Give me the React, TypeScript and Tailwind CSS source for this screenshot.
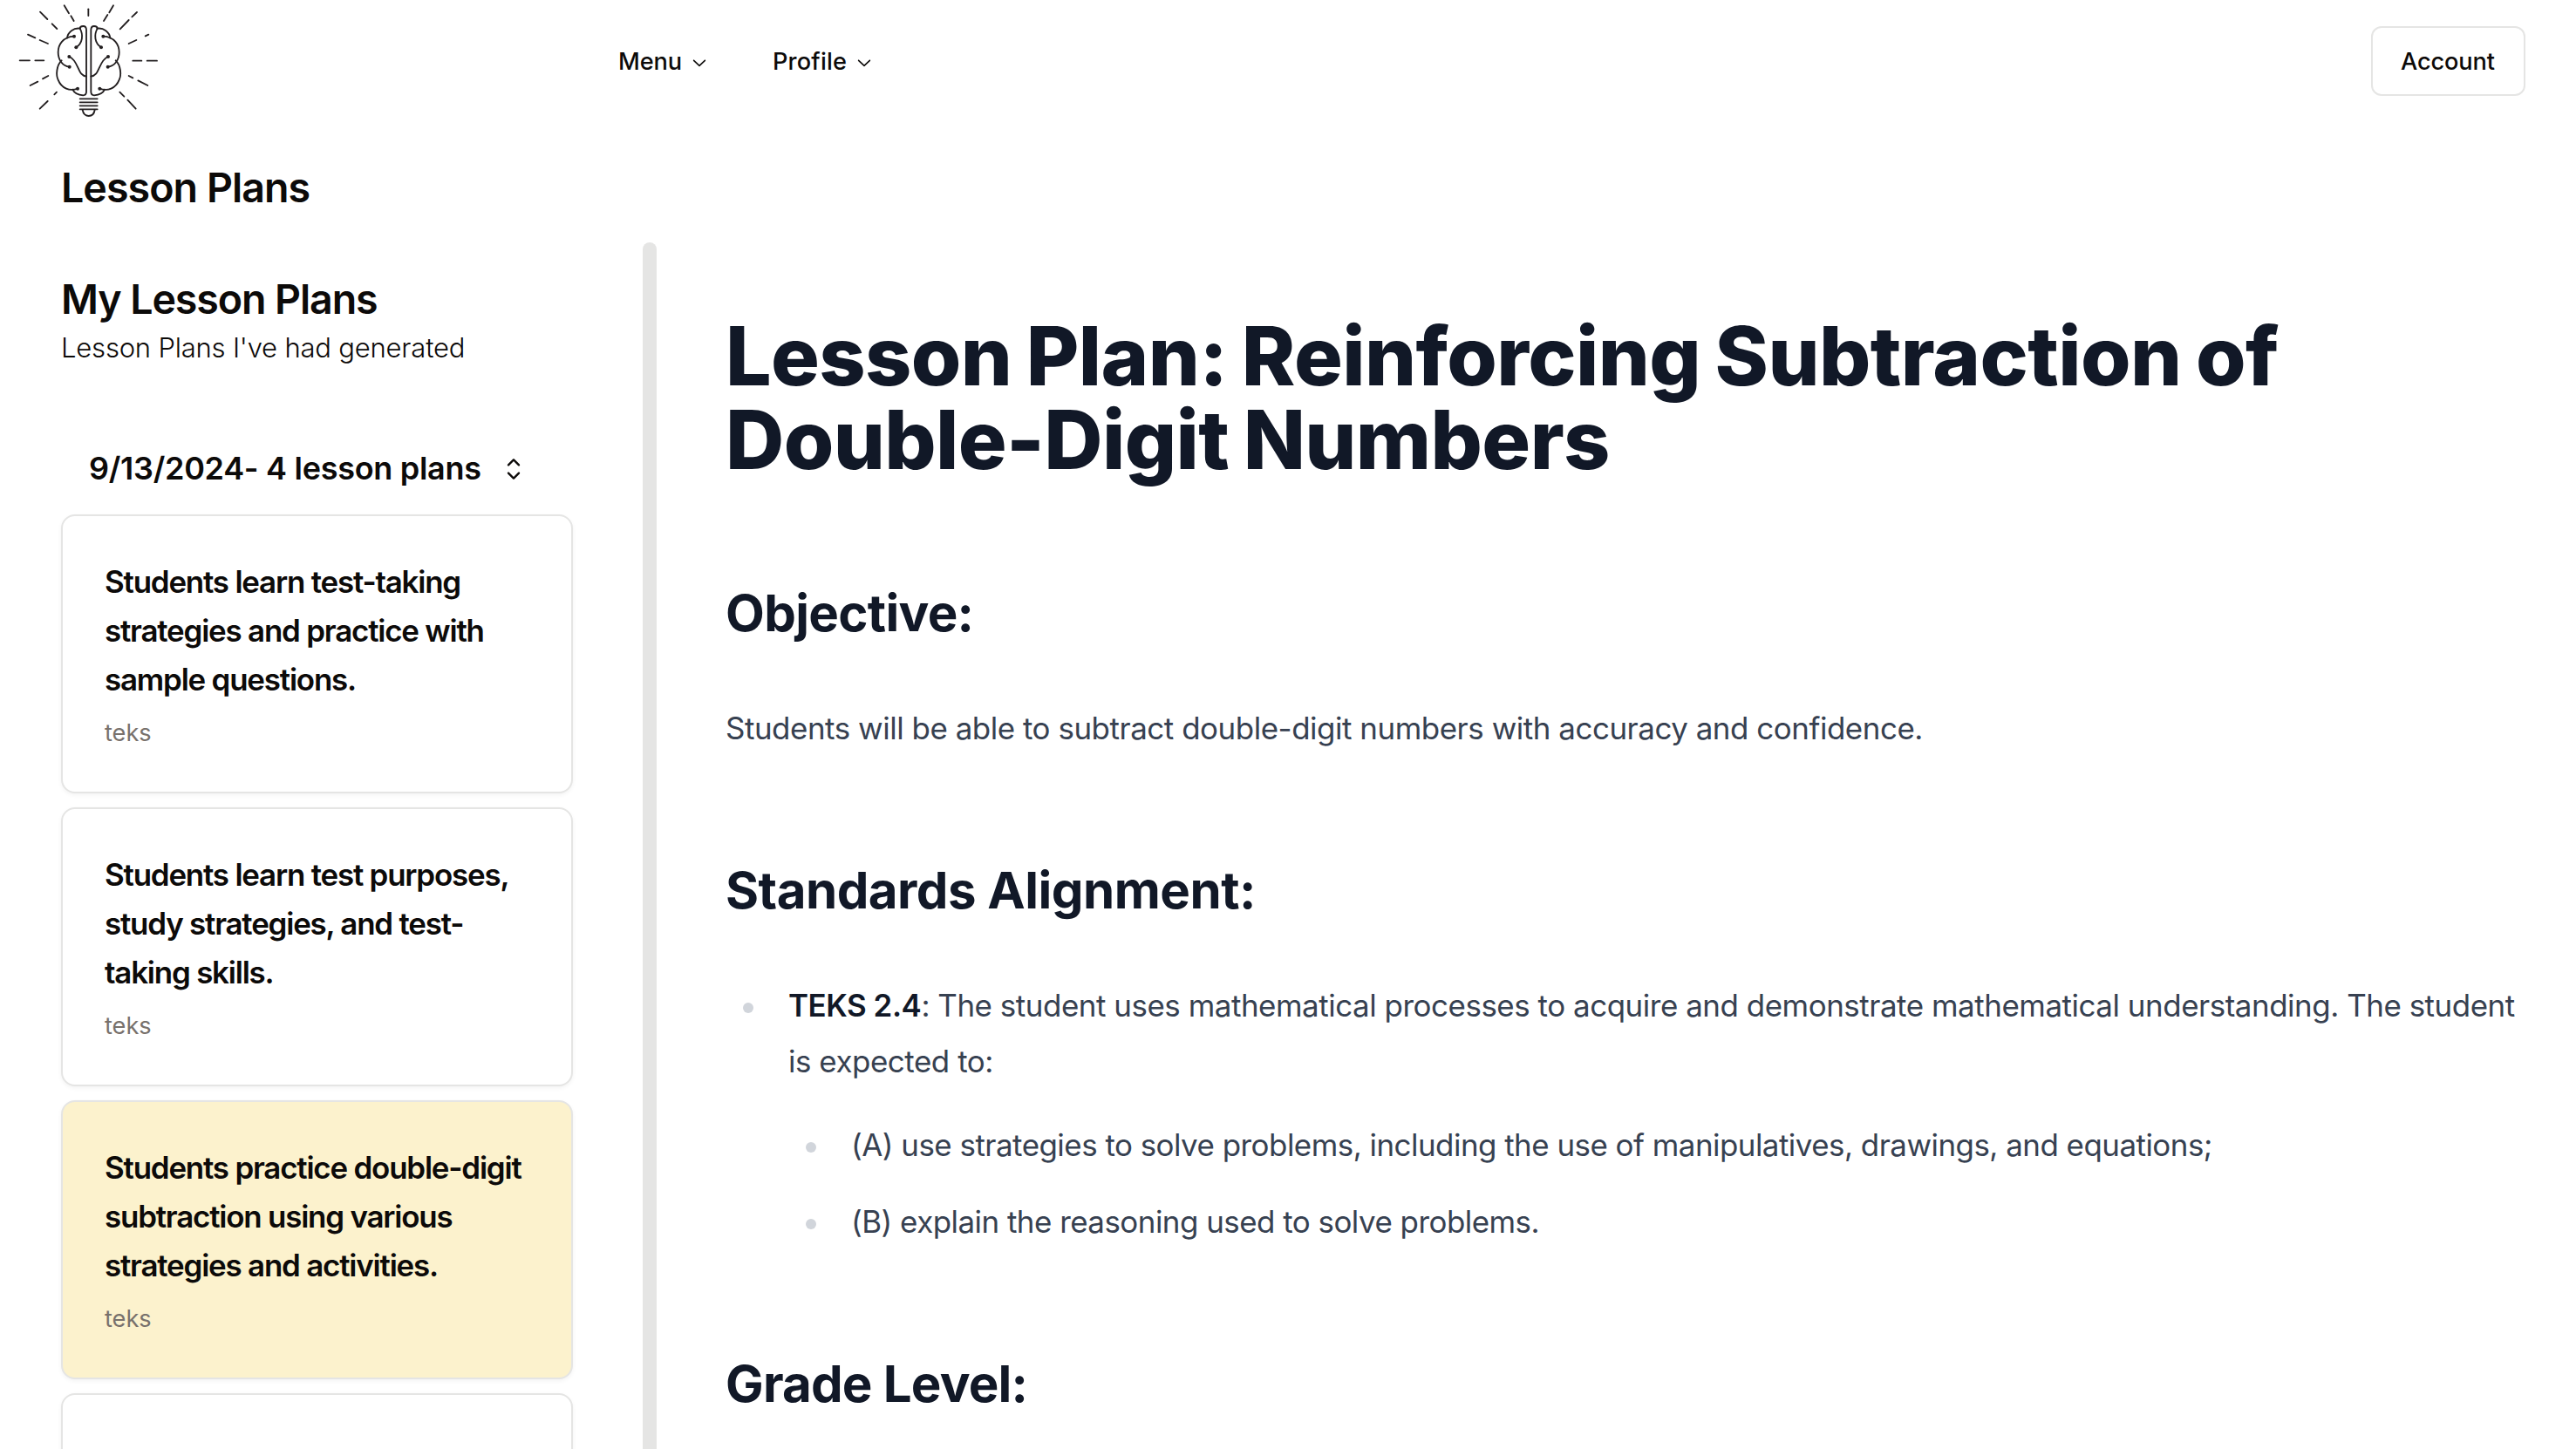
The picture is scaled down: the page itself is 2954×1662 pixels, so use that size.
import React from "react";
import { RxCaretSort, RxChevronDown } from "react-icons/rx";

const rays = [
  "M304 31V54",
  "M221 19L237 46M244 55L254 72",
  "M138 41L163 66M179 82L196 99",
  "M96 119L121 130M137 138L165 150",
  "M68 208H102M121 208H151",
  "M104 294L130 281M147 271L166 261",
  "M137 374L164 348M187 325L195 317",
  "M390 19L376 43M370 51L357 72",
  "M471 42L454 58M443 69L413 100",
  "M511 119L500 124M469 138L443 150",
  "M457 209H487M506 209H540",
  "M443 261L457 268M475 277L508 294",
  "M412 317L427 332M439 344L467 374",
];

function BrainHalf() {
  return (
    <>
      <path d="M275 98C275 92 280 90 286 90Q297 90 297 103V316Q297 328 286 328C272 327 256 322 250 308" />
      <path d="M275 98C254 95 233 110 231 131" />
      <path d="M275 98C287 120 285 148 262 163" />
      <path d="M254 125C216 127 200 155 200 180C200 205 215 228 239 230" />
      <path d="M212 208C194 225 192 258 200 275C212 305 240 315 267 305" />
      <path d="M238 195C262 203 268 240 280 254Q287 262 297 263" />
      <g fill="#231f20" stroke="none">
        <circle cx="255" cy="125" r="6" />
        <circle cx="262" cy="163" r="6" />
        <circle cx="238" cy="195" r="6" />
        <circle cx="239" cy="230" r="6" />
        <circle cx="267" cy="305" r="6" />
      </g>
    </>
  );
}

function Logo() {
  return (
    <svg
      viewBox="0 0 660 420"
      className="h-[140px] w-[220px]"
      fill="none"
      stroke="#231f20"
      strokeWidth="5.5"
      strokeLinecap="round"
      strokeLinejoin="round"
    >
      {rays.map((d) => (
        <path key={d} d={d} />
      ))}
      <BrainHalf />
      <g transform="translate(610 0) scale(-1 1)">
        <BrainHalf />
      </g>
      <path d="M275 340H335M275 352H335M275 364H335M275 376H335" />
      <path d="M284 378C286 392 296 399 305 399C315 399 324 392 326 378" />
    </svg>
  );
}

function Header() {
  return (
    <header className="flex h-[140px] items-center pr-[58px] text-[27.15px] font-medium">
      <div className="w-[673px]">
        <Logo />
      </div>
      <nav className="flex pt-0.5">
        <button className="flex items-center px-9 tracking-[-0.1px]">
          Menu
          <RxChevronDown className="ml-2 size-6" />
        </button>
        <button className="flex items-center px-9 tracking-[0.2px]">
          Profile
          <RxChevronDown className="ml-2 size-6" />
        </button>
      </nav>
      <button className="ml-auto h-20 w-[177px] rounded-xl border-2 border-[#e5e5e4] pt-0.5 pr-px tracking-[-0.1px]">
        Account
      </button>
    </header>
  );
}

type Plan = { id: number; title?: string; tag?: string; selected?: boolean };

const plans: Plan[] = [
  { id: 1, title: "Students learn test-taking strategies and practice with sample questions.", tag: "teks" },
  { id: 2, title: "Students learn test purposes, study strategies, and test-taking skills.", tag: "teks" },
  { id: 3, title: "Students practice double-digit subtraction using various strategies and activities.", tag: "teks", selected: true },
  { id: 4 },
];

function Sidebar() {
  return (
    <aside className="w-[587px] shrink-0">
      <h2 className="pt-[33px] text-[46.55px] leading-[64px] font-semibold tracking-[-1.09px]">
        My Lesson Plans
      </h2>
      <p className="pt-px text-[31.03px] leading-[46px] font-light tracking-[-0.205px]">
        Lesson Plans I've had generated
      </p>
      <div className="mt-20 flex h-[72px] items-center pl-8">
        <h4 className="pb-[3px] text-[36px] font-semibold tracking-[-0.29px]">9/13/2024- 4 lesson plans</h4>
        <RxCaretSort className="ml-[17px] size-10" />
      </div>
      <div className="mt-4 flex flex-col gap-4">
        {plans.map((p) => (
          <article
            key={p.id}
            className={
              "h-80 rounded-2xl border-2 border-[#e5e5e4] px-12 pt-[47px] shadow-[0_2px_5px_rgba(0,0,0,0.05)] " +
              (p.selected ? "bg-[#fcf2cd]" : "bg-white")
            }
          >
            {p.title && (
              <h3 className="text-[34.91px] leading-[56px] font-semibold tracking-[-1.2px]">{p.title}</h3>
            )}
            {p.tag && <p className="mt-3.5 text-[27.15px] leading-10 text-[#78716c]">{p.tag}</p>}
          </article>
        ))}
      </div>
    </aside>
  );
}

function Section({ title, tracking, children }: { title: string; tracking: string; children?: React.ReactNode }) {
  return (
    <section>
      <h2 className={"mb-[60px] text-[58.18px] leading-[80px] font-bold text-[#111827] " + tracking}>
        {title}
      </h2>
      {children}
    </section>
  );
}

function Item({ children }: { children: React.ReactNode }) {
  return (
    <li className="flex">
      <span className="mt-[29px] mr-10 ml-5 size-3 shrink-0 rounded-full bg-[#d1d5db]" />
      <div>{children}</div>
    </li>
  );
}

function Lesson() {
  return (
    <main className="min-w-0 flex-1 pt-[82px] pr-12 pl-[79px] text-[34.91px] leading-[64px] tracking-[-0.455px] text-[#374151]">
      <h1 className="mb-[111px] text-[93.09px] leading-[96px] font-extrabold tracking-[-0.6px] [word-spacing:-3.4px] text-[#111827]">
        Lesson Plan: Reinforcing Subtraction of
        <br />
        Double-Digit Numbers
      </h1>
      <Section title="Objective:" tracking="tracking-[-0.676px]">
        <p className="mb-[114px]">
          Students will be able to subtract double-digit numbers with accuracy and confidence.
        </p>
      </Section>
      <Section title="Standards Alignment:" tracking="tracking-[-0.505px]">
        <ul className="mb-[114px]">
          <Item>
            <strong className="font-semibold text-[#111827]">TEKS 2.4</strong>: The student uses mathematical
            processes to acquire and demonstrate mathematical understanding. The student is expected to:
            <ul className="mt-8 flex flex-col gap-6 tracking-[-0.51px]">
              <Item>
                (A) use strategies to solve problems, including the use of manipulatives, drawings, and equations;
              </Item>
              <Item>(B) explain the reasoning used to solve problems.</Item>
            </ul>
          </Item>
        </ul>
      </Section>
      <Section title="Grade Level:" tracking="tracking-[-0.78px]" />
    </main>
  );
}

export default function App() {
  return (
    <div className="flex h-[1662px] flex-col overflow-hidden bg-white font-['Inter','Liberation_Sans',sans-serif] text-[#0c0a09]">
      <Header />
      <h1 className="h-[138px] shrink-0 pt-[43px] pl-[70px] text-[46.55px] leading-[64px] font-semibold tracking-[-0.95px]">
        Lesson Plans
      </h1>
      <div className="flex h-[1384px] shrink-0 overflow-hidden pl-[70px]">
        <Sidebar />
        <div className="ml-20 w-4 shrink-0 rounded-t-full bg-[#e5e5e4]" />
        <Lesson />
      </div>
    </div>
  );
}
